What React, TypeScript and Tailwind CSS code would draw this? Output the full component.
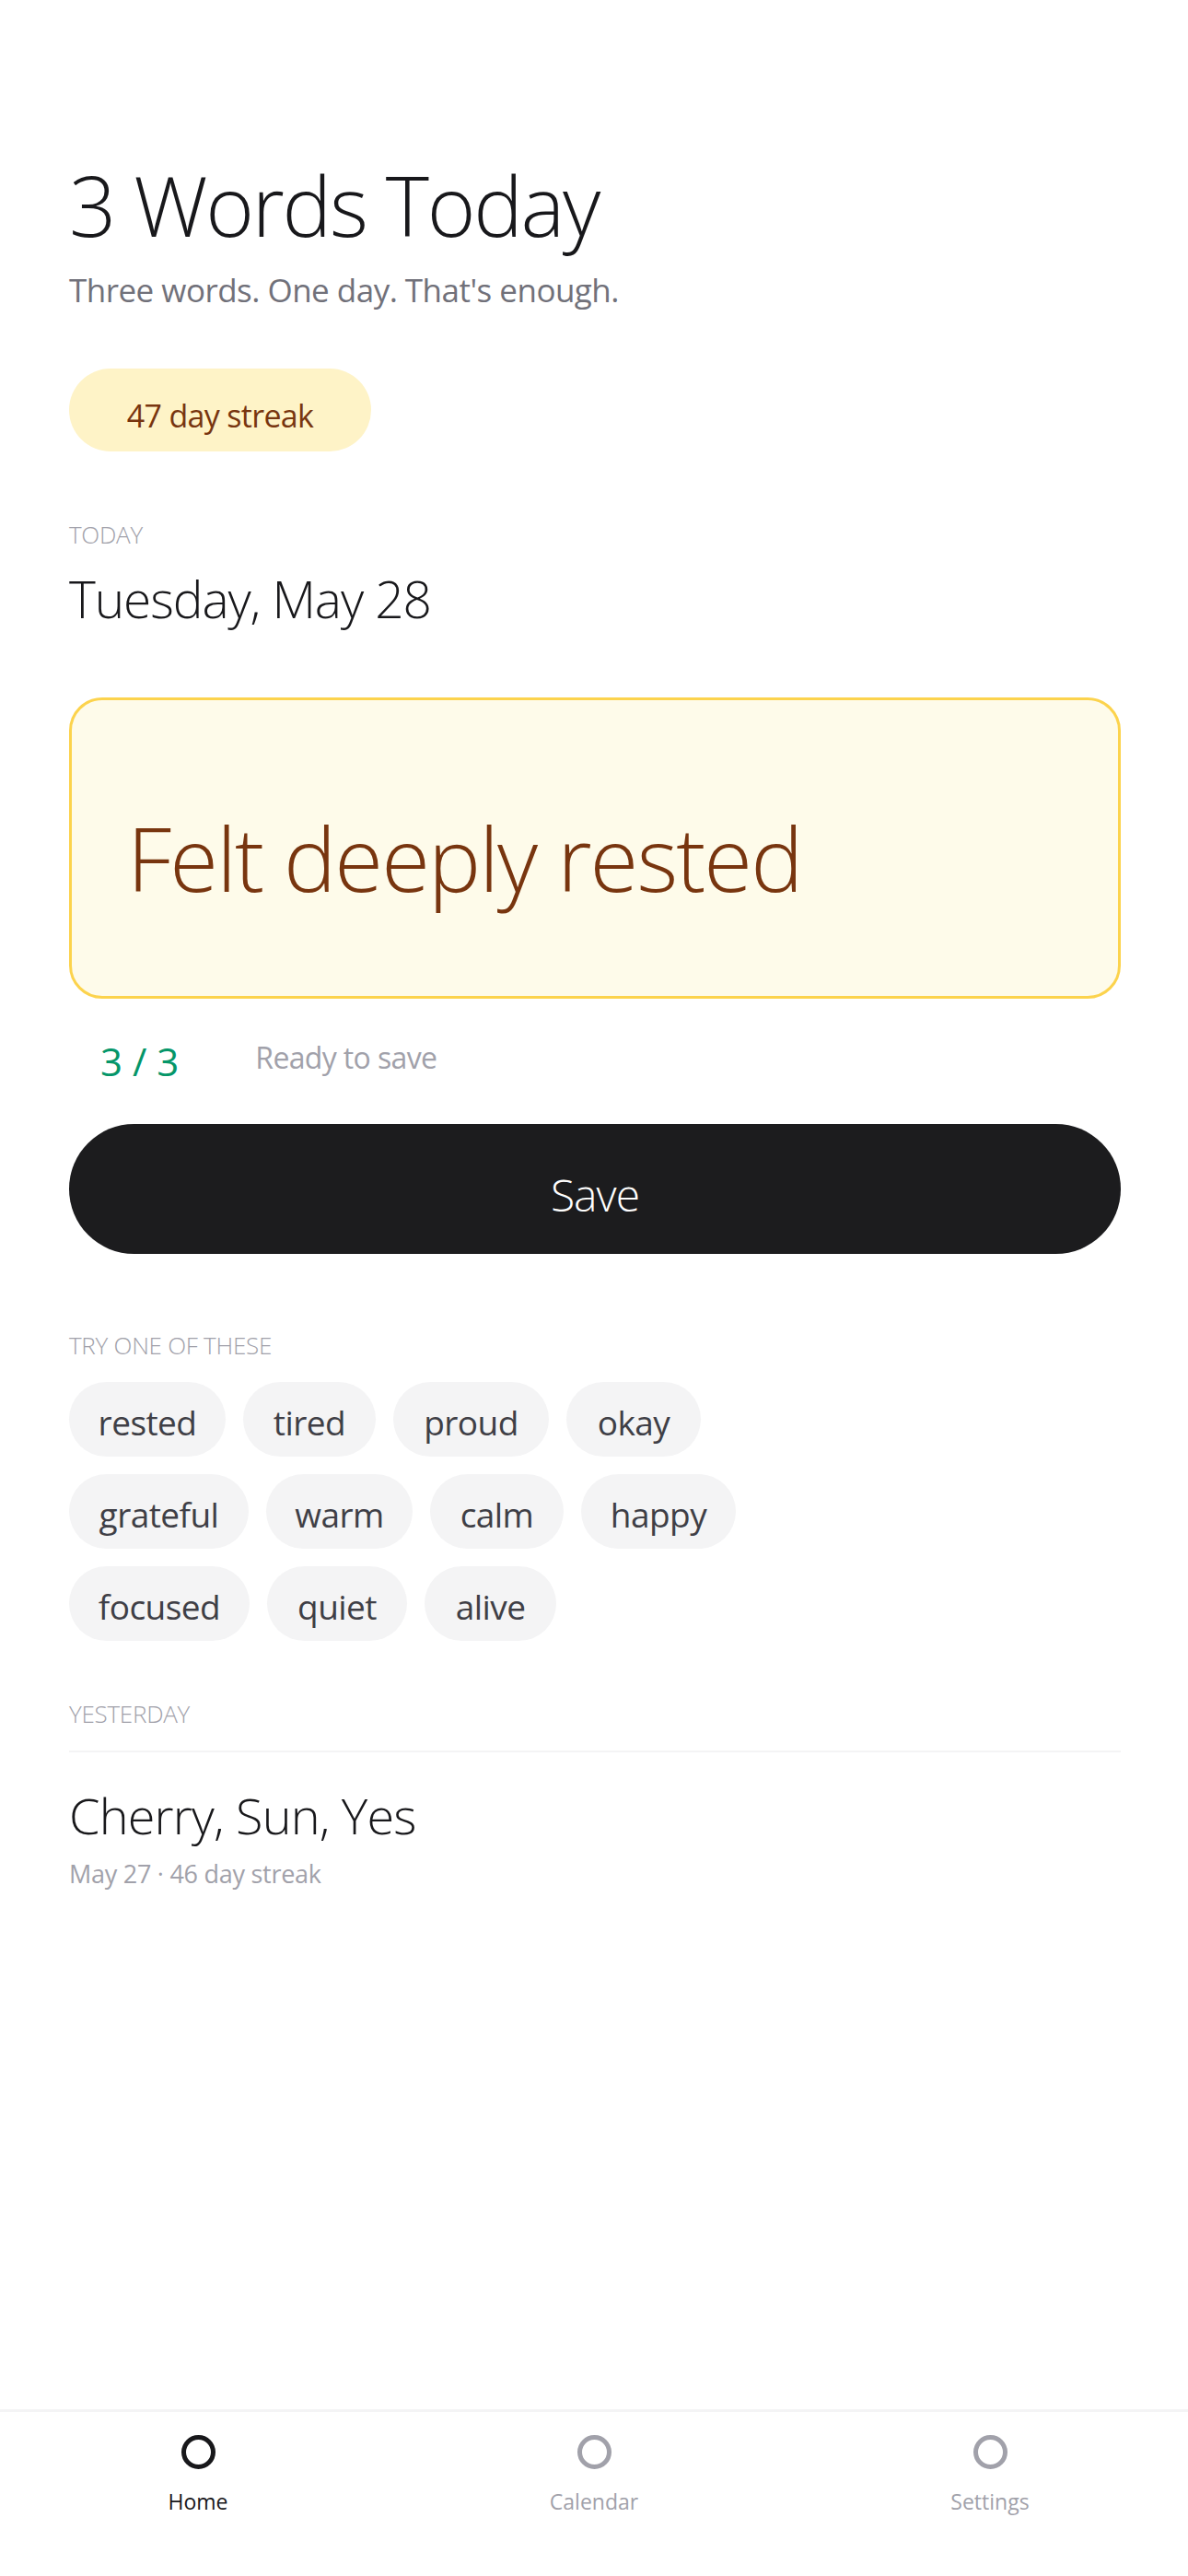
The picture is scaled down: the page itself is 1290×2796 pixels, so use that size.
import { ReactNode } from "react"

const font = { fontFamily: '"Open Sans", "Noto Sans", "Liberation Sans", sans-serif' }

const rows: { word: string; w: string }[][] = [
  [
    { word: "rested", w: "w-[170px]" },
    { word: "tired", w: "w-[144px]" },
    { word: "proud", w: "w-[169px]" },
    { word: "okay", w: "w-[146px]" },
  ],
  [
    { word: "grateful", w: "w-[195px]" },
    { word: "warm", w: "w-[159px]" },
    { word: "calm", w: "w-[145px]" },
    { word: "happy", w: "w-[168px]" },
  ],
  [
    { word: "focused", w: "w-[196px]" },
    { word: "quiet", w: "w-[152px]" },
    { word: "alive", w: "w-[143px]" },
  ],
]

const Label = ({ children, className }: { children: ReactNode; className: string }) => (
  <div className={"text-[26px] leading-none font-light uppercase tracking-[-0.01em] text-[#a1a1aa] " + className}>
    {children}
  </div>
)

const NavItem = ({ label, active }: { label: string; active?: boolean }) => (
  <div className="flex flex-col items-center pt-[25px]">
    <div
      className={
        "w-[37px] h-[37px] rounded-full border-[5px] " +
        (active ? "border-[#18181b]" : "border-[#a1a1aa]")
      }
    />
    <div
      className={
        "mt-[24px] text-[23px] leading-none " +
        (active ? "text-[#18181b]" : "text-[#a1a1aa]")
      }
    >
      {label}
    </div>
  </div>
)

export default function App() {
  return (
    <div className="min-h-[2796px] flex flex-col bg-white" style={font}>
      <main className="flex-1 pl-[75px] pr-[73px] pt-[177px]">
        <h1 className="text-[90px] leading-none font-light tracking-[-0.025em] text-[#18181b]">
          3 Words Today
        </h1>
        <p className="mt-[30px] text-[35px] leading-none tracking-[-0.015em] text-[#71717a]">
          Three words. One day. That's enough.
        </p>

        <div className="mt-[68px] flex items-center justify-center w-[328px] h-[90px] pt-[11px] rounded-full bg-[#fef3c7] text-[34px] leading-none tracking-[-0.02em] text-[#78350f]">
          47 day streak
        </div>

        <Label className="mt-[77px]">Today</Label>
        <div className="mt-[29px] text-[55px] leading-none font-light tracking-[-0.02em] text-[#18181b]">
          Tuesday, May 28
        </div>

        <div className="mt-[80px] h-[327px] flex items-center pt-[20px] pl-[60px] pr-[66px] rounded-[36px] border-[3px] border-[#fcd34d] bg-[#fefbea]">
          <span className="text-[96px] leading-none font-light tracking-[-0.02em] text-[#78350f]">
            Felt deeply rested
          </span>
        </div>

        <div className="mt-[47px] flex items-start">
          <span className="ml-[34px] text-[42px] leading-none text-[#059669]">3 / 3</span>
          <span className="ml-[83px] mt-[1px] text-[32px] leading-none tracking-[-0.02em] text-[#a1a1aa]">
            Ready to save
          </span>
        </div>

        <button className="mt-[47px] w-full h-[141px] pt-[12px] rounded-full bg-[#1c1c1e] text-white text-[48px] leading-none font-light tracking-[-0.02em]">
          Save
        </button>

        <Label className="mt-[86px]">Try one of these</Label>
        <div className="mt-[27px] flex flex-col gap-[19px]">
          {rows.map((row, i) => (
            <div key={i} className="flex gap-[19px]">
              {row.map((c) => (
                <button
                  key={c.word}
                  className={
                    "h-[81px] pt-[6px] flex items-center justify-center rounded-full bg-[#f4f4f5] text-[37px] leading-none tracking-[-0.015em] text-[#3f3f46] " +
                    c.w
                  }
                >
                  {c.word}
                </button>
              ))}
            </div>
          ))}
        </div>

        <Label className="mt-[66px]">Yesterday</Label>
        <div className="mt-[27px] h-[2px] bg-[#f4f4f5]" />
        <div className="mt-[41px] text-[54px] leading-none font-light tracking-[-0.015em] text-[#18181b]">
          Cherry, Sun, Yes
        </div>
        <div className="mt-[23px] text-[27px] leading-none tracking-[-0.01em] text-[#a1a1aa]">
          May 27 · 46 day streak
        </div>
      </main>

      <nav className="h-[181px] border-t-[3px] border-[#f4f4f5] grid grid-cols-3">
        <NavItem label="Home" active />
        <NavItem label="Calendar" />
        <NavItem label="Settings" />
      </nav>
    </div>
  )
}
